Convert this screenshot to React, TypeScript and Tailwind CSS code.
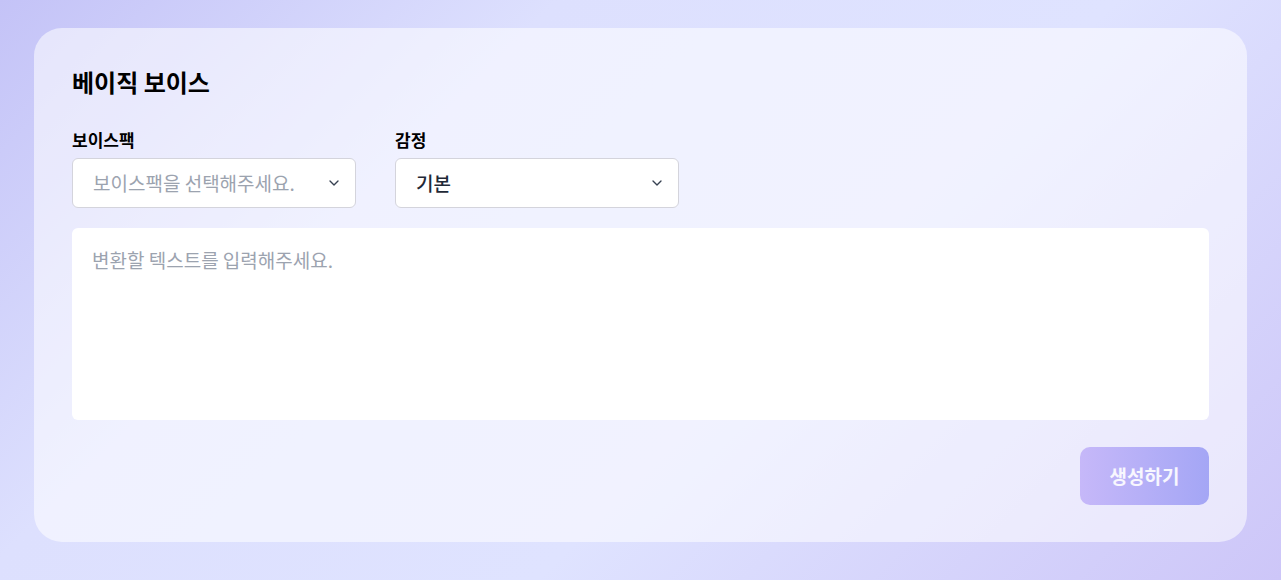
import { ChevronDown } from "lucide-react";

const font = { fontFamily: '"Noto Sans CJK KR", "Noto Sans", sans-serif' };

function Select({ label, value, placeholder }: { label: string; value?: string; placeholder: string }) {
  return (
    <div className="flex w-[284px] flex-col gap-2">
      <label className="text-[17px] font-semibold leading-5 text-black">{label}</label>
      <div className="flex h-[50px] items-center justify-between rounded-md border border-[#d4d4dc] bg-white pl-5 pr-[13px]">
        <span className={value ? "text-[19px] font-medium text-[#1f2937]" : "text-[19px] text-[#9ca3af]"}>
          {value ?? placeholder}
        </span>
        <ChevronDown className="size-4 text-[#374151]" strokeWidth={2} />
      </div>
    </div>
  );
}

export default function App() {
  return (
    <div
      style={font}
      className="min-h-[580px] w-full bg-[linear-gradient(135deg,#c4c3f7_0%,#dde0fe_30%,#dfe3ff_60%,#cdc6f8_100%)] px-[34px] pt-[28px] pb-[38px]"
    >
      <div className="flex flex-col rounded-[28px] bg-white/55 px-[38px] pt-[38px] pb-[37px]">
        <h1 className="text-[24px] font-bold leading-8 text-black">베이직 보이스</h1>
        <div className="mt-8 flex gap-[39px]">
          <Select label="보이스팩" placeholder="보이스팩을 선택해주세요." />
          <Select label="감정" value="기본" placeholder="" />
        </div>
        <textarea
          style={font}
          placeholder="변환할 텍스트를 입력해주세요."
          className="mt-5 h-[192px] resize-none rounded-md bg-white px-5 pt-[18px] pb-4 text-[19px] leading-7 text-[#1f2937] outline-none placeholder:text-[#9ca3af]"
        />
        <div className="mt-[27px] flex justify-end">
          <button className="h-[58px] w-[129px] rounded-[10px] bg-[linear-gradient(90deg,#c6b8f9,#a4a6f5)] text-[19px] font-bold text-white/90">
            생성하기
          </button>
        </div>
      </div>
    </div>
  );
}
